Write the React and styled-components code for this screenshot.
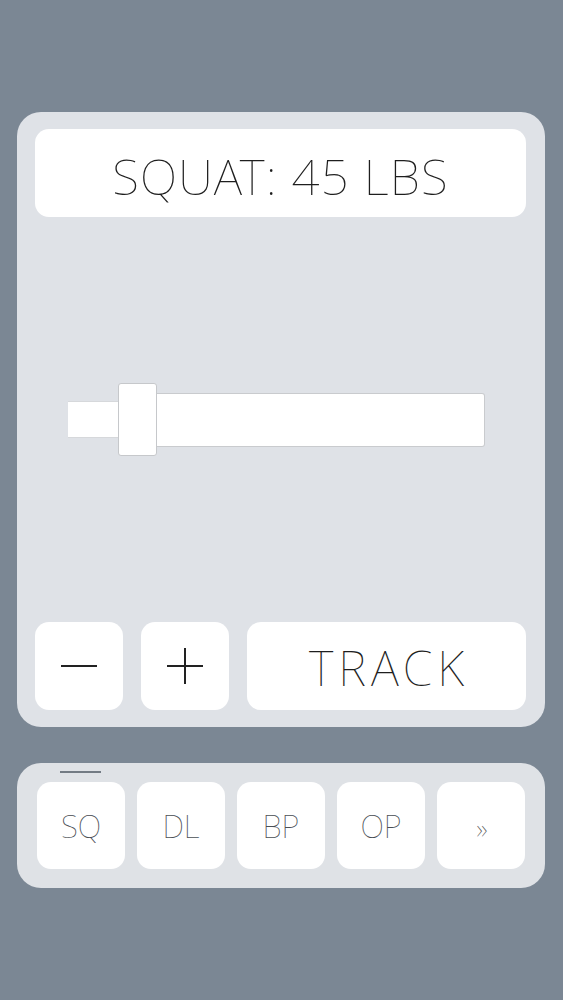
import React, { useState } from "react";
import styled, { createGlobalStyle } from "styled-components";

const GlobalStyle = createGlobalStyle`
  html, body {
    margin: 0;
    padding: 0;
    background: #7b8794;
  }
  body {
    font-family: "Noto Sans", "Open Sans", sans-serif;
  }
  * { box-sizing: border-box; }
`;

const Page = styled.div`
  min-height: 1000px;
  background: #7b8794;
  padding: 112px 18px 0 17px;
  display: flex;
  flex-direction: column;
  gap: 36px;
`;

const Panel = styled.section`
  background: #dfe2e7;
  border-radius: 24px;
  height: 615px;
  padding: 17px 19px 17px 18px;
  display: flex;
  flex-direction: column;
`;

const Card = styled.div`
  background: #ffffff;
  border-radius: 14px;
  display: flex;
  align-items: center;
  justify-content: center;
`;

const Header = styled(Card)`
  height: 88px;
  padding-top: 6px;
  font-weight: 150;
  font-size: 49px;
  letter-spacing: 1.2px;
  color: #1e1e1e;
  white-space: nowrap;
`;

const SliderArea = styled.div`
  flex: 1;
  display: flex;
  align-items: center;
  padding: 0 41px 0 33px;
`;

const Slider = styled.div`
  flex: 1;
  display: flex;
  align-items: center;
`;

const Fill = styled.div`
  width: ${(p) => p.$w}px;
  height: 37px;
  background: #fff;
  border-top: 1px solid #d6d8db;
  border-bottom: 1px solid #d6d8db;
`;

const Thumb = styled.div`
  width: 39px;
  height: 73px;
  background: #fff;
  border: 1.5px solid #c6c8cb;
  border-radius: 3px;
  flex: none;
`;

const Rail = styled.div`
  flex: 1;
  height: 54px;
  background: #fff;
  border: 1.5px solid #c9cbce;
  border-left: none;
  border-radius: 0 3px 3px 0;
`;

const Controls = styled.div`
  height: 88px;
  display: grid;
  grid-template-columns: 88px 88px 1fr;
  gap: 18px;
`;

const Button = styled(Card).attrs({ as: "button" })`
  border: none;
  margin: 0;
  padding: 0;
  cursor: pointer;
  font-family: "Noto Sans", "Open Sans", sans-serif;
  font-weight: 150;
  color: #1e1e1e;
`;

const TrackButton = styled(Button)`
  font-size: 48px;
  letter-spacing: 5px;
  padding-left: 5px;
  padding-top: 3px;
`;

const TabPanel = styled.nav`
  position: relative;
  background: #dfe2e6;
  border-radius: 24px;
  height: 125px;
  padding: 19px 20px;
  display: grid;
  grid-template-columns: repeat(5, 88px);
  gap: 12px;
`;

const Indicator = styled.div`
  position: absolute;
  top: 8px;
  left: ${(p) => 43 + p.$i * 100}px;
  width: 41px;
  height: 2px;
  background: #737b84;
`;

const Tab = styled(Button)`
  height: 87px;
  font-size: 31px;
  color: #4a4f55;
  font-weight: 120;
`;

const More = styled.span`
  font-size: 28px;
  color: #555;
  padding-top: 4px;
  padding-left: 2px;
`;

const Icon = ({ plus }) => (
  <svg width="36" height="36" viewBox="0 0 36 36" fill="none">
    <line x1="0" y1="18" x2="36" y2="18" stroke="#222" strokeWidth="2" />
    {plus && <line x1="18" y1="0" x2="18" y2="36" stroke="#222" strokeWidth="2" />}
  </svg>
);

const tabs = ["SQ", "DL", "BP", "OP"];

export default function App() {
  const [active, setActive] = useState(0);
  return (
    <>
      <GlobalStyle />
      <Page>
        <Panel>
          <Header>SQUAT: 45 LBS</Header>
          <SliderArea>
            <Slider>
              <Fill $w={50} />
              <Thumb />
              <Rail />
            </Slider>
          </SliderArea>
          <Controls>
            <Button aria-label="decrease">
              <Icon />
            </Button>
            <Button aria-label="increase">
              <Icon plus />
            </Button>
            <TrackButton>TRACK</TrackButton>
          </Controls>
        </Panel>
        <TabPanel>
          <Indicator $i={active} />
          {tabs.map((t, i) => (
            <Tab key={t} onClick={() => setActive(i)}>
              {t}
            </Tab>
          ))}
          <Tab>
            <More>»</More>
          </Tab>
        </TabPanel>
      </Page>
    </>
  );
}
